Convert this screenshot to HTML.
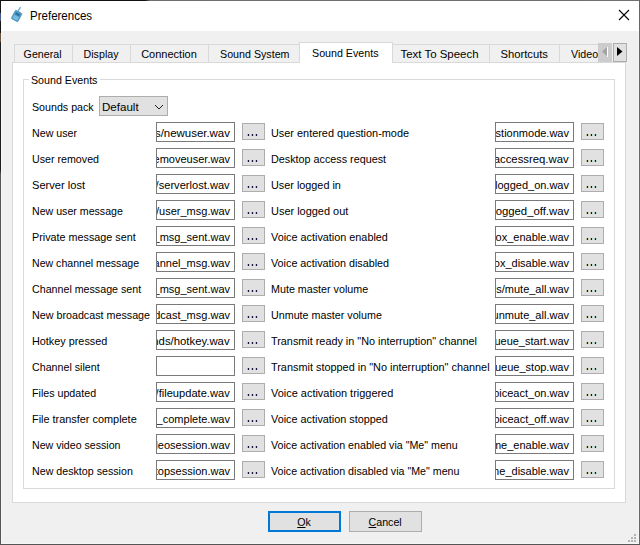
<!DOCTYPE html><html><head><meta charset="utf-8"><style>
*{margin:0;padding:0;box-sizing:border-box}
html,body{width:640px;height:545px;overflow:hidden;background:#f0f0f0}
body{position:relative;font-family:"Liberation Sans",sans-serif;font-size:11px;color:#000}
.a{position:absolute}
.t{position:absolute;white-space:pre;line-height:15px;height:15px;transform:scaleX(0.97);transform-origin:0 0}
.tc{position:absolute;white-space:pre;line-height:15px;height:15px;text-align:center}
.tc span{display:inline-block;transform:scaleX(0.97)}
.ed{position:absolute;width:79px;height:20px;border:1px solid #7a7a7a;background:#fff;overflow:hidden}
.ed span{position:absolute;right:4px;top:3px;white-space:pre;line-height:15px;transform:scaleX(1.0);transform-origin:100% 0}
.bt{position:absolute;width:23px;height:17px;border:1px solid #adadad;background:#e1e1e1}
.dot{position:absolute;width:3px;height:2px;background:linear-gradient(90deg,#c8b890 0,#c8b890 33%,#1a1040 33%,#1a1040 67%,#a8d8d8 67%);top:10px}
.bd{position:absolute;background:#d9d9d9}
</style></head><body>
<div class="a" style="left:0;top:0;width:640px;height:31px;background:#fff"></div>
<div class="a" style="left:1px;top:31px;width:1px;height:513px;background:#f6f6f6"></div>
<div class="a" style="left:638px;top:31px;width:1px;height:513px;background:#f6f6f6"></div>
<div class="a" style="left:1px;top:543px;width:638px;height:1px;background:#f6f6f6"></div>
<div class="a" style="left:0;top:0;width:640px;height:1px;background:linear-gradient(90deg,#111 0,#111 145px,#6e6e6e 150px,#707070 100%)"></div>
<div class="a" style="left:0;top:0;width:1px;height:545px;background:linear-gradient(180deg,#151515 0,#151515 13px,#4a5a8a 13px,#4a5a8a 21px,#151515 21px,#151515 33px,#6a5540 33px,#6a5540 42px,#1d1d1d 42px,#1d1d1d 170px,#555 174px,#555 100%)"></div>
<div class="a" style="left:639px;top:0;width:1px;height:545px;background:#666"></div>
<div class="a" style="left:0;top:544px;width:640px;height:1px;background:#555"></div>
<svg class="a" style="left:9px;top:5px" width="18" height="20" viewBox="0 0 18 20">
<line x1="9" y1="6.2" x2="11.6" y2="2.2" stroke="#62abd6" stroke-width="1.3"/>
<g transform="translate(7.65 11) rotate(28)"><rect x="-3.65" y="-4.7" width="7.3" height="9.4" rx="0.8" fill="#5aa6d2" stroke="#3a7ea8" stroke-width="0.7"/>
<rect x="-2.4" y="-3.3" width="4.8" height="2.6" fill="#2d74a0"/><rect x="-2.6" y="0.2" width="5.2" height="3.6" fill="#78bbe0"/></g></svg>
<div class="t" style="left:30px;top:9px;font-size:12px;transform:scaleX(0.96)">Preferences</div>
<svg class="a" style="left:618px;top:9px" width="12" height="12" viewBox="0 0 12 12"><path d="M1 1L11 11M11 1L1 11" stroke="#000" stroke-width="1.1"/></svg>
<div class="bd" style="left:14px;top:44px;width:584px;height:1px"></div>
<div class="bd" style="left:14px;top:44px;width:1px;height:18px"></div>
<div class="bd" style="left:72px;top:44px;width:1px;height:18px"></div>
<div class="bd" style="left:130px;top:44px;width:1px;height:18px"></div>
<div class="bd" style="left:208px;top:44px;width:1px;height:18px"></div>
<div class="bd" style="left:489px;top:44px;width:1px;height:18px"></div>
<div class="bd" style="left:559px;top:44px;width:1px;height:18px"></div>
<div class="a" style="left:12px;top:62px;width:614px;height:441px;background:#fff;border:1px solid #d9d9d9"></div>
<div class="a" style="left:299px;top:42px;width:94px;height:21px;background:#fff;border:1px solid #d9d9d9;border-bottom:none"></div>
<div class="tc" style="left:14px;width:58px;top:47px"><span style="transform:scaleX(0.97)">General</span></div>
<div class="tc" style="left:72px;width:58px;top:47px"><span style="transform:scaleX(0.97)">Display</span></div>
<div class="tc" style="left:130px;width:78px;top:47px"><span style="transform:scaleX(1.0)">Connection</span></div>
<div class="tc" style="left:208px;width:93px;top:47px"><span style="transform:scaleX(0.97)">Sound System</span></div>
<div class="tc" style="left:301px;width:89px;top:46px"><span style="transform:scaleX(0.97)">Sound Events</span></div>
<div class="tc" style="left:390px;width:99px;top:47px"><span style="transform:scaleX(1.04)">Text To Speech</span></div>
<div class="tc" style="left:489px;width:70px;top:47px"><span style="transform:scaleX(1.02)">Shortcuts</span></div>
<div class="t" style="left:571px;top:47px">Video</div>
<div class="a" style="left:598px;top:43px;width:14px;height:19px;background:#cccccc"></div>
<svg class="a" style="left:598px;top:43px" width="14" height="19"><path d="M9 4L4 8.5L9 13Z" fill="#a3a3a3"/><rect x="9" y="4" width="1" height="10" fill="#fff"/></svg>
<div class="a" style="left:613px;top:43px;width:14px;height:19px;background:#e1e1e1;border:1px solid #adadad"></div>
<svg class="a" style="left:613px;top:43px" width="14" height="19"><path d="M4 4L9.5 8.5L4 13Z" fill="#000"/></svg>
<div class="a" style="left:23px;top:79px;width:592px;height:410px;border:1px solid #d9d9d9"></div>
<div class="a" style="left:29px;top:72px;width:71px;height:14px;background:#fff"></div>
<div class="t" style="left:31px;top:73px">Sound Events</div>
<div class="t" style="left:32px;top:100px">Sounds pack</div>
<div class="a" style="left:99px;top:96px;width:69px;height:20px;background:#e1e1e1;border:1px solid #adadad"></div>
<div class="t" style="left:102px;top:100px;transform:scaleX(1.05)">Default</div>
<svg class="a" style="left:154px;top:103px" width="10" height="8"><path d="M1 2L5 6L9 2" fill="none" stroke="#222" stroke-width="1"/></svg>
<div class="t" style="left:32px;top:126px;transform:scaleX(0.97)">New user</div>
<div class="ed" style="left:156px;top:122px"><span style="transform:scaleX(1.04)">Sounds/newuser.wav</span></div>
<div class="bt" style="left:242px;top:123px"><i class="dot" style="left:4px"></i><i class="dot" style="left:8px"></i><i class="dot" style="left:12px"></i></div>
<div class="t" style="left:271px;top:126px;transform:scaleX(0.99)">User entered question-mode</div>
<div class="ed" style="left:495px;top:122px"><span style="transform:scaleX(1)">Sounds/questionmode.wav</span></div>
<div class="bt" style="left:581px;top:123px"><i class="dot" style="left:4px"></i><i class="dot" style="left:8px"></i><i class="dot" style="left:12px"></i></div>
<div class="t" style="left:32px;top:152px;transform:scaleX(0.97)">User removed</div>
<div class="ed" style="left:156px;top:148px"><span style="transform:scaleX(1)">Sounds/removeuser.wav</span></div>
<div class="bt" style="left:242px;top:149px"><i class="dot" style="left:4px"></i><i class="dot" style="left:8px"></i><i class="dot" style="left:12px"></i></div>
<div class="t" style="left:271px;top:152px;transform:scaleX(0.98)">Desktop access request</div>
<div class="ed" style="left:495px;top:148px"><span style="transform:scaleX(1.03)">Sounds/desktopaccessreq.wav</span></div>
<div class="bt" style="left:581px;top:149px"><i class="dot" style="left:4px"></i><i class="dot" style="left:8px"></i><i class="dot" style="left:12px"></i></div>
<div class="t" style="left:32px;top:178px;transform:scaleX(1.01)">Server lost</div>
<div class="ed" style="left:156px;top:174px"><span style="transform:scaleX(1.01)">Sounds/serverlost.wav</span></div>
<div class="bt" style="left:242px;top:175px"><i class="dot" style="left:4px"></i><i class="dot" style="left:8px"></i><i class="dot" style="left:12px"></i></div>
<div class="t" style="left:271px;top:178px;transform:scaleX(0.985)">User logged in</div>
<div class="ed" style="left:495px;top:174px"><span style="transform:scaleX(1)">Sounds/logged_on.wav</span></div>
<div class="bt" style="left:581px;top:175px"><i class="dot" style="left:4px"></i><i class="dot" style="left:8px"></i><i class="dot" style="left:12px"></i></div>
<div class="t" style="left:32px;top:204px;transform:scaleX(0.965)">New user message</div>
<div class="ed" style="left:156px;top:200px"><span style="transform:scaleX(1)">Sounds/user_msg.wav</span></div>
<div class="bt" style="left:242px;top:201px"><i class="dot" style="left:4px"></i><i class="dot" style="left:8px"></i><i class="dot" style="left:12px"></i></div>
<div class="t" style="left:271px;top:204px;transform:scaleX(0.995)">User logged out</div>
<div class="ed" style="left:495px;top:200px"><span style="transform:scaleX(1.03)">Sounds/logged_off.wav</span></div>
<div class="bt" style="left:581px;top:201px"><i class="dot" style="left:4px"></i><i class="dot" style="left:8px"></i><i class="dot" style="left:12px"></i></div>
<div class="t" style="left:32px;top:230px;transform:scaleX(0.98)">Private message sent</div>
<div class="ed" style="left:156px;top:226px"><span style="transform:scaleX(1)">Sounds/user_msg_sent.wav</span></div>
<div class="bt" style="left:242px;top:227px"><i class="dot" style="left:4px"></i><i class="dot" style="left:8px"></i><i class="dot" style="left:12px"></i></div>
<div class="t" style="left:271px;top:230px;transform:scaleX(0.985)">Voice activation enabled</div>
<div class="ed" style="left:495px;top:226px"><span style="transform:scaleX(1)">Sounds/vox_enable.wav</span></div>
<div class="bt" style="left:581px;top:227px"><i class="dot" style="left:4px"></i><i class="dot" style="left:8px"></i><i class="dot" style="left:12px"></i></div>
<div class="t" style="left:32px;top:256px;transform:scaleX(0.962)">New channel message</div>
<div class="ed" style="left:156px;top:252px"><span style="transform:scaleX(1)">Sounds/channel_msg.wav</span></div>
<div class="bt" style="left:242px;top:253px"><i class="dot" style="left:4px"></i><i class="dot" style="left:8px"></i><i class="dot" style="left:12px"></i></div>
<div class="t" style="left:271px;top:256px;transform:scaleX(0.98)">Voice activation disabled</div>
<div class="ed" style="left:495px;top:252px"><span style="transform:scaleX(1)">Sounds/vox_disable.wav</span></div>
<div class="bt" style="left:581px;top:253px"><i class="dot" style="left:4px"></i><i class="dot" style="left:8px"></i><i class="dot" style="left:12px"></i></div>
<div class="t" style="left:32px;top:282px;transform:scaleX(0.97)">Channel message sent</div>
<div class="ed" style="left:156px;top:278px"><span style="transform:scaleX(1)">Sounds/channel_msg_sent.wav</span></div>
<div class="bt" style="left:242px;top:279px"><i class="dot" style="left:4px"></i><i class="dot" style="left:8px"></i><i class="dot" style="left:12px"></i></div>
<div class="t" style="left:271px;top:282px;transform:scaleX(0.975)">Mute master volume</div>
<div class="ed" style="left:495px;top:278px"><span style="transform:scaleX(1)">Sounds/mute_all.wav</span></div>
<div class="bt" style="left:581px;top:279px"><i class="dot" style="left:4px"></i><i class="dot" style="left:8px"></i><i class="dot" style="left:12px"></i></div>
<div class="t" style="left:32px;top:308px;transform:scaleX(0.975)">New broadcast message</div>
<div class="ed" style="left:156px;top:304px"><span style="transform:scaleX(1)">Sounds/broadcast_msg.wav</span></div>
<div class="bt" style="left:242px;top:305px"><i class="dot" style="left:4px"></i><i class="dot" style="left:8px"></i><i class="dot" style="left:12px"></i></div>
<div class="t" style="left:271px;top:308px;transform:scaleX(0.975)">Unmute master volume</div>
<div class="ed" style="left:495px;top:304px"><span style="transform:scaleX(1)">Sounds/unmute_all.wav</span></div>
<div class="bt" style="left:581px;top:305px"><i class="dot" style="left:4px"></i><i class="dot" style="left:8px"></i><i class="dot" style="left:12px"></i></div>
<div class="t" style="left:32px;top:334px;transform:scaleX(0.985)">Hotkey pressed</div>
<div class="ed" style="left:156px;top:330px"><span style="transform:scaleX(1.03)">Sounds/hotkey.wav</span></div>
<div class="bt" style="left:242px;top:331px"><i class="dot" style="left:4px"></i><i class="dot" style="left:8px"></i><i class="dot" style="left:12px"></i></div>
<div class="t" style="left:271px;top:334px;transform:scaleX(0.985)">Transmit ready in &quot;No interruption&quot; channel</div>
<div class="ed" style="left:495px;top:330px"><span style="transform:scaleX(1)">Sounds/txqueue_start.wav</span></div>
<div class="bt" style="left:581px;top:331px"><i class="dot" style="left:4px"></i><i class="dot" style="left:8px"></i><i class="dot" style="left:12px"></i></div>
<div class="t" style="left:32px;top:360px;transform:scaleX(0.97)">Channel silent</div>
<div class="ed" style="left:156px;top:356px"><span style="transform:scaleX(1)"></span></div>
<div class="bt" style="left:242px;top:357px"><i class="dot" style="left:4px"></i><i class="dot" style="left:8px"></i><i class="dot" style="left:12px"></i></div>
<div class="t" style="left:271px;top:360px;transform:scaleX(0.99)">Transmit stopped in &quot;No interruption&quot; channel</div>
<div class="ed" style="left:495px;top:356px"><span style="transform:scaleX(1)">Sounds/txqueue_stop.wav</span></div>
<div class="bt" style="left:581px;top:357px"><i class="dot" style="left:4px"></i><i class="dot" style="left:8px"></i><i class="dot" style="left:12px"></i></div>
<div class="t" style="left:32px;top:386px;transform:scaleX(0.97)">Files updated</div>
<div class="ed" style="left:156px;top:382px"><span style="transform:scaleX(1.01)">Sounds/fileupdate.wav</span></div>
<div class="bt" style="left:242px;top:383px"><i class="dot" style="left:4px"></i><i class="dot" style="left:8px"></i><i class="dot" style="left:12px"></i></div>
<div class="t" style="left:271px;top:386px;transform:scaleX(0.995)">Voice activation triggered</div>
<div class="ed" style="left:495px;top:382px"><span style="transform:scaleX(1)">Sounds/voiceact_on.wav</span></div>
<div class="bt" style="left:581px;top:383px"><i class="dot" style="left:4px"></i><i class="dot" style="left:8px"></i><i class="dot" style="left:12px"></i></div>
<div class="t" style="left:32px;top:412px;transform:scaleX(0.99)">File transfer complete</div>
<div class="ed" style="left:156px;top:408px"><span style="transform:scaleX(1)">Sounds/filetx_complete.wav</span></div>
<div class="bt" style="left:242px;top:409px"><i class="dot" style="left:4px"></i><i class="dot" style="left:8px"></i><i class="dot" style="left:12px"></i></div>
<div class="t" style="left:271px;top:412px;transform:scaleX(0.985)">Voice activation stopped</div>
<div class="ed" style="left:495px;top:408px"><span style="transform:scaleX(1)">Sounds/voiceact_off.wav</span></div>
<div class="bt" style="left:581px;top:409px"><i class="dot" style="left:4px"></i><i class="dot" style="left:8px"></i><i class="dot" style="left:12px"></i></div>
<div class="t" style="left:32px;top:438px;transform:scaleX(0.965)">New video session</div>
<div class="ed" style="left:156px;top:434px"><span style="transform:scaleX(1)">Sounds/videosession.wav</span></div>
<div class="bt" style="left:242px;top:435px"><i class="dot" style="left:4px"></i><i class="dot" style="left:8px"></i><i class="dot" style="left:12px"></i></div>
<div class="t" style="left:271px;top:438px;transform:scaleX(0.97)">Voice activation enabled via &quot;Me&quot; menu</div>
<div class="ed" style="left:495px;top:434px"><span style="transform:scaleX(1)">Sounds/vox_me_enable.wav</span></div>
<div class="bt" style="left:581px;top:435px"><i class="dot" style="left:4px"></i><i class="dot" style="left:8px"></i><i class="dot" style="left:12px"></i></div>
<div class="t" style="left:32px;top:464px;transform:scaleX(0.97)">New desktop session</div>
<div class="ed" style="left:156px;top:460px"><span style="transform:scaleX(1)">Sounds/desktopsession.wav</span></div>
<div class="bt" style="left:242px;top:461px"><i class="dot" style="left:4px"></i><i class="dot" style="left:8px"></i><i class="dot" style="left:12px"></i></div>
<div class="t" style="left:271px;top:464px;transform:scaleX(0.97)">Voice activation disabled via &quot;Me&quot; menu</div>
<div class="ed" style="left:495px;top:460px"><span style="transform:scaleX(1)">Sounds/vox_me_disable.wav</span></div>
<div class="bt" style="left:581px;top:461px"><i class="dot" style="left:4px"></i><i class="dot" style="left:8px"></i><i class="dot" style="left:12px"></i></div>
<div class="a" style="left:268px;top:511px;width:73px;height:21px;background:#e1e1e1;border:2px solid #0078d7"></div>
<div class="tc" style="left:268px;width:73px;top:515px"><span><u>O</u>k</span></div>
<div class="a" style="left:349px;top:511px;width:73px;height:21px;background:#e1e1e1;border:1px solid #adadad"></div>
<div class="tc" style="left:349px;width:73px;top:515px"><span><u>C</u>ancel</span></div>
<div class="a" style="left:634px;top:534px;width:2px;height:2px;background:#b4b4b4"></div>
<div class="a" style="left:631px;top:537px;width:2px;height:2px;background:#b4b4b4"></div>
<div class="a" style="left:634px;top:537px;width:2px;height:2px;background:#b4b4b4"></div>
<div class="a" style="left:628px;top:540px;width:2px;height:2px;background:#b4b4b4"></div>
<div class="a" style="left:631px;top:540px;width:2px;height:2px;background:#b4b4b4"></div>
<div class="a" style="left:634px;top:540px;width:2px;height:2px;background:#b4b4b4"></div>
</body></html>
